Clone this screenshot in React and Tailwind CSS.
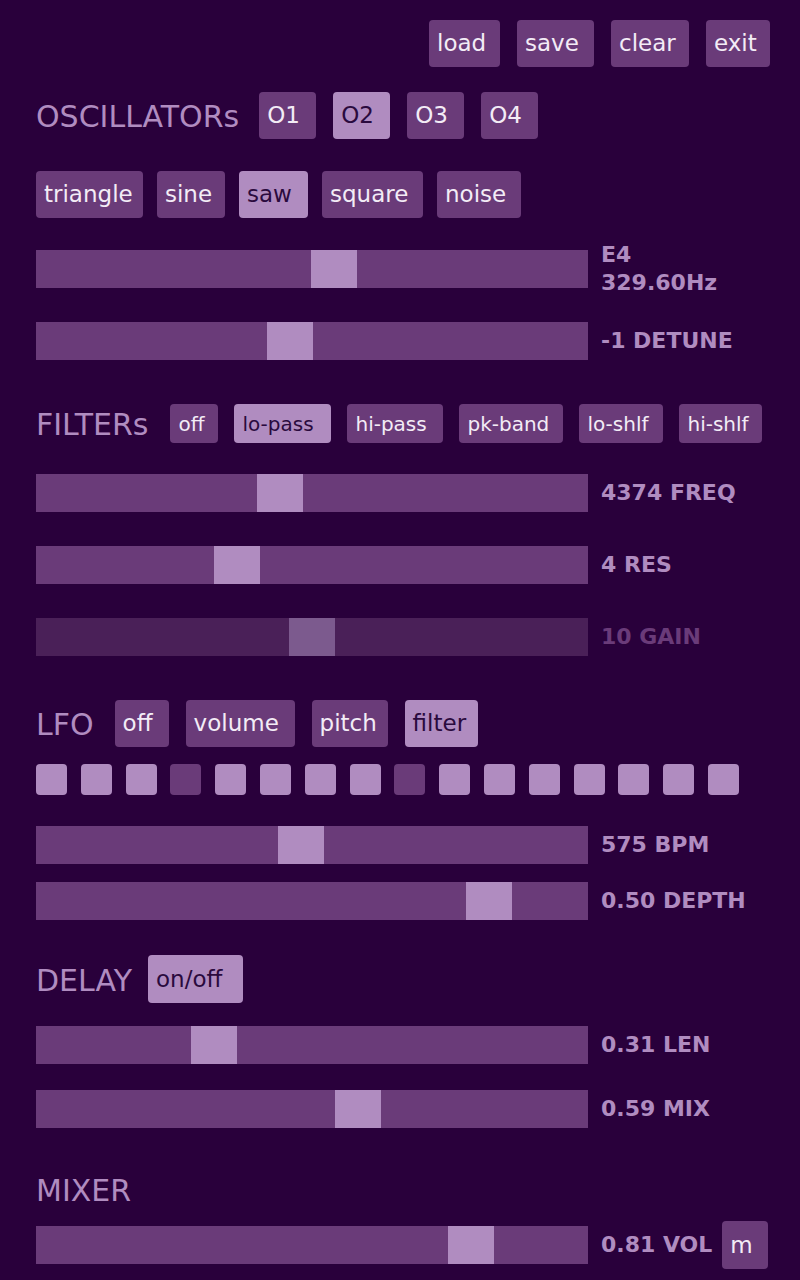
const sliders = {
    pitch: 275,
    detune: 231,
    freq: 221,
    res: 178,
    gain: 253,
    bpm: 242,
    depth: 430,
    len: 155,
    mix: 299,
    vol: 412,
};

const steps = [1, 1, 1, 0, 1, 1, 1, 1, 0, 1, 1, 1, 1, 1, 1, 1];

const Btn = ({ label, w, h = 'h-[47px]', size = 'text-[23px]', active = false }) => (
    <button
        type="button"
        className={`${w} ${h} ${size} shrink-0 rounded pl-2 text-left leading-none ${
            active ? 'bg-[#b08cc0] text-[#2a0a3e]' : 'bg-[#6a3b79] text-[#f3ecf6]'
        }`}
    >
        {label}
    </button>
);

const Heading = ({ children, className = '' }) => (
    <h2 className={`pt-[3px] text-[30px] leading-none font-normal text-[#b08cc0] ${className}`}>{children}</h2>
);

const Slider = ({ pos, className = '', dim = false, children }) => (
    <div className={`flex h-[38px] items-center ${className}`}>
        <div className={`flex h-[38px] w-[552px] shrink-0 ${dim ? 'bg-[#4a2058]' : 'bg-[#6a3b79]'}`}>
            <div style={{ width: pos }} />
            <div className={`h-full w-[46px] ${dim ? 'bg-[#7c5a8e]' : 'bg-[#b08cc0]'}`} />
        </div>
        <div className={`ml-[13px] text-[22px] leading-[28px] font-bold ${dim ? 'text-[#6a3b79]' : 'text-[#b08cc0]'}`}>
            {children}
        </div>
    </div>
);

export default function App() {
    return (
        <div className="min-h-screen bg-[#29003b] pl-9 pr-[30px] pt-5 font-['DejaVu_Sans',sans-serif]">
            <div className="flex justify-end gap-[17px]">
                <Btn label="load" w="w-[71px]" />
                <Btn label="save" w="w-[77px]" />
                <Btn label="clear" w="w-[78px]" />
                <Btn label="exit" w="w-[64px]" />
            </div>

            <div className="mt-[25px] flex items-center">
                <Heading className="mr-5">OSCILLATORs</Heading>
                <div className="flex gap-[17px]">
                    <Btn label="O1" w="w-[57px]" />
                    <Btn label="O2" w="w-[57px]" active />
                    <Btn label="O3" w="w-[57px]" />
                    <Btn label="O4" w="w-[57px]" />
                </div>
            </div>

            <div className="mt-8 flex gap-[14px]">
                <Btn label="triangle" w="w-[107px]" />
                <Btn label="sine" w="w-[68px]" />
                <Btn label="saw" w="w-[69px]" active />
                <Btn label="square" w="w-[101px]" />
                <Btn label="noise" w="w-[84px]" />
            </div>

            <Slider pos={sliders.pitch} className="mt-8">
                E4
                <br />
                329.60Hz
            </Slider>
            <Slider pos={sliders.detune} className="mt-[34px]">-1 DETUNE</Slider>

            <div className="mt-[44px] flex items-center">
                <Heading className="mr-[22px]">FILTERs</Heading>
                <div className="flex gap-4">
                    <Btn label="off" w="w-[48px]" h="h-[39px]" size="text-[20px]" />
                    <Btn label="lo-pass" w="w-[97px]" h="h-[39px]" size="text-[20px]" active />
                    <Btn label="hi-pass" w="w-[96px]" h="h-[39px]" size="text-[20px]" />
                    <Btn label="pk-band" w="w-[104px]" h="h-[39px]" size="text-[20px]" />
                    <Btn label="lo-shlf" w="w-[84px]" h="h-[39px]" size="text-[20px]" />
                    <Btn label="hi-shlf" w="w-[83px]" h="h-[39px]" size="text-[20px]" />
                </div>
            </div>

            <Slider pos={sliders.freq} className="mt-[31px]">4374 FREQ</Slider>
            <Slider pos={sliders.res} className="mt-[34px]">4 RES</Slider>
            <Slider pos={sliders.gain} className="mt-[34px]" dim>10 GAIN</Slider>

            <div className="mt-[44px] flex items-center">
                <Heading className="mr-[21px]">LFO</Heading>
                <div className="flex gap-[17px]">
                    <Btn label="off" w="w-[54px]" />
                    <Btn label="volume" w="w-[109px]" />
                    <Btn label="pitch" w="w-[76px]" />
                    <Btn label="filter" w="w-[73px]" active />
                </div>
            </div>

            <div className="mt-[17px] flex gap-[13.8px]">
                {steps.map((on, i) => (
                    <div
                        key={i}
                        className={`h-[31px] w-[31px] rounded ${on ? 'bg-[#b08cc0]' : 'bg-[#6a3b79]'}`}
                    />
                ))}
            </div>

            <Slider pos={sliders.bpm} className="mt-[31px]">575 BPM</Slider>
            <Slider pos={sliders.depth} className="mt-[18px]">0.50 DEPTH</Slider>

            <div className="mt-[35px] flex items-center">
                <Heading className="mr-4">DELAY</Heading>
                <Btn label="on/off" w="w-[95px]" h="h-[48px]" active />
            </div>

            <Slider pos={sliders.len} className="mt-[23px]">0.31 LEN</Slider>
            <Slider pos={sliders.mix} className="mt-[26px]">0.59 MIX</Slider>

            <div className="mt-[41px] flex h-10 items-center">
                <Heading>MIXER</Heading>
            </div>

            <div className="mt-[17px] flex h-[38px] items-center">
                <Slider pos={sliders.vol}>0.81 VOL</Slider>
                <div className="ml-[10px]">
                    <Btn label="m" w="w-[46px]" h="h-[48px]" />
                </div>
            </div>
        </div>
    );
}
